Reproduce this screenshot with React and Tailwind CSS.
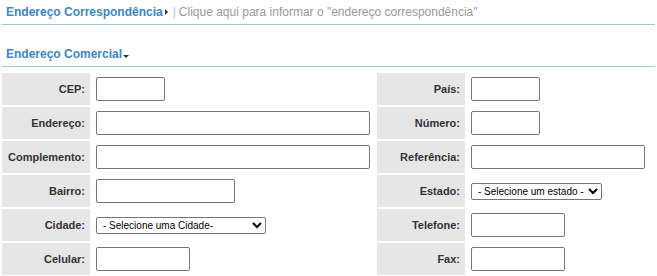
import { useState } from "react";

const FONT = { fontFamily: '"Liberation Sans", Arial, sans-serif' };

const ROWS = [
  { left: "CEP:", leftW: "w-[69px]", right: "País:", rightW: "w-[69px]" },
  { left: "Endereço:", leftW: "w-[274px]", right: "Número:", rightW: "w-[69px]" },
  { left: "Complemento:", leftW: "w-[274px]", right: "Referência:", rightW: "w-[174px]" },
  { left: "Bairro:", leftW: "w-[139px]", right: "Estado:", select: "- Selecione um estado -", selectW: "w-[131px]" },
  { left: "Cidade:", leftSelect: "- Selecione uma Cidade-", leftSelectW: "w-[170px]", right: "Telefone:", rightW: "w-[94px]" },
  { left: "Celular:", leftW: "w-[94px]", right: "Fax:", rightW: "w-[94px]" },
];

function Label({ children }) {
  return (
    <div className="bg-[#e6e6e6] flex items-center justify-end pr-[5px] text-[11px] font-bold text-[#333]">
      {children}
    </div>
  );
}

function Field({ w }) {
  return (
    <input
      type="text"
      className={`${w} h-[24px] border border-[#767676] rounded-[2px] bg-white outline-none`}
    />
  );
}

function Select({ w, text }) {
  return (
    <select className={`${w} h-[17px] border border-[#767676] rounded-[2px] bg-white text-[10px] text-black pl-[2px]`}>
      <option>{text}</option>
    </select>
  );
}

export default function App() {
  const [open] = useState(true);

  return (
    <div className="w-[657px] h-[276px] bg-white overflow-hidden" style={FONT}>
      {/* Endereço correspondência */}
      <div className="mx-[2px] h-[25px] flex items-center pl-[4px] border-b border-[#9fc6d4] text-[12px]">
        <span className="font-bold text-[#3b86c8]">Endereço Correspondência</span>
        <span className="ml-[2px] inline-block w-0 h-0 border-y-[3px] border-y-transparent border-l-[3px] border-l-[#333]" />
        <span className="ml-[5px] text-[#bbb]">|</span>
        <span className="ml-[3px] text-[#999]">Clique aqui para informar o "endereço correspondência"</span>
      </div>

      {/* Endereço comercial */}
      <div className="mx-[2px] mt-[16px] h-[26px] flex items-center pl-[4px] border-b border-[#9fc6d4] text-[12px]">
        <span className="font-bold text-[#3b86c8]">Endereço Comercial</span>
        {open && (
          <span className="ml-[1px] mt-[6px] inline-block w-0 h-0 border-x-[3px] border-x-transparent border-t-[3px] border-t-[#333]" />
        )}
      </div>

      <div className="mt-[6px] ml-[2px] grid grid-cols-[88px_287px_88px_1fr] gap-y-[2px]">
        {ROWS.map((r) => (
          <div key={r.left} className="contents">
            <div className="h-[32px] grid"><Label>{r.left}</Label></div>
            <div className="h-[32px] flex items-center pl-[6px]">
              {r.leftSelect ? <Select w={r.leftSelectW} text={r.leftSelect} /> : <Field w={r.leftW} />}
            </div>
            <div className="h-[32px] grid"><Label>{r.right}</Label></div>
            <div className="h-[32px] flex items-center pl-[6px]">
              {r.select ? <Select w={r.selectW} text={r.select} /> : <Field w={r.rightW} />}
            </div>
          </div>
        ))}
      </div>
    </div>
  );
}
